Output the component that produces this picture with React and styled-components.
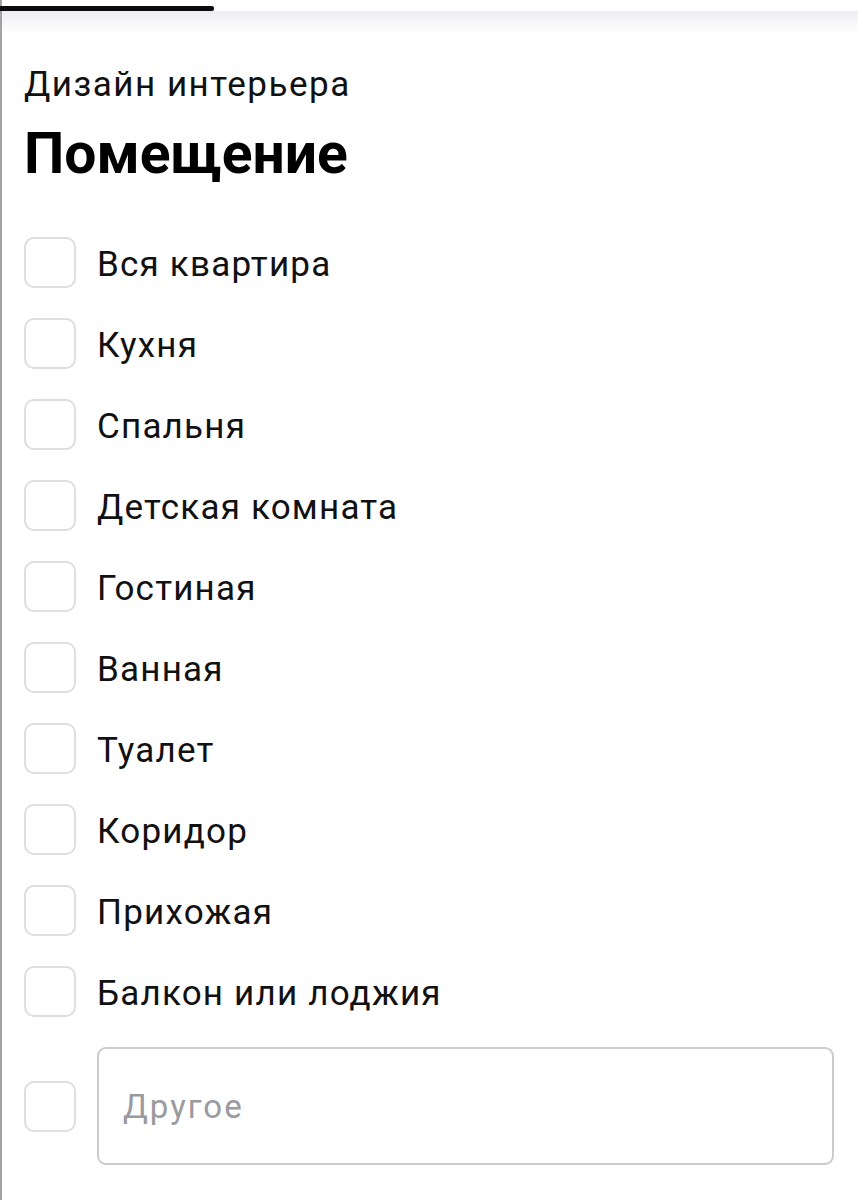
import React from 'react';
import styled, { createGlobalStyle } from 'styled-components';

const GlobalStyle = createGlobalStyle`
  html, body {
    margin: 0;
    padding: 0;
    background: #fff;
  }
  body {
    font-family: Roboto, "Liberation Sans", sans-serif;
    color: #111;
  }
`;

const Page = styled.div`
  min-height: 1200px;
  border-left: 2px solid #a3a3a3;
  box-sizing: border-box;
`;

const Header = styled.div`
  padding-top: 6px;
`;

const Progress = styled.div`
  width: 214px;
  height: 5px;
  margin-left: -2px;
  background: #0c0c0c;
  border-radius: 0 2px 2px 0;
`;

const Shade = styled.div`
  height: 24px;
  background: linear-gradient(180deg, #ededf2 0%, #f6f6f9 40%, #ffffff 100%);
`;

const Content = styled.div`
  padding: 30px 24px 0 22px;
`;

const Subtitle = styled.div`
  font-size: 35px;
  line-height: 40px;
  letter-spacing: 1.5px;
  font-weight: 400;
  color: #111;
`;

const Title = styled.h1`
  margin: 16px 0 0;
  font-size: 57px;
  line-height: 66px;
  font-weight: 700;
  color: #000;
`;

const List = styled.div`
  display: flex;
  flex-direction: column;
  gap: 30px;
  margin-top: 50px;
`;

const Row = styled.label`
  display: flex;
  align-items: center;
  gap: 21px;
`;

const Box = styled.span`
  flex: none;
  width: 52px;
  height: 51px;
  box-sizing: border-box;
  border: 2px solid #dedede;
  border-radius: 10px;
  background: #fff;
`;

const Label = styled.span`
  font-size: 35px;
  line-height: 40px;
  letter-spacing: 1.2px;
  color: #111;
  margin-top: 5px;
`;

const OtherInput = styled.input`
  flex: 1;
  height: 118px;
  box-sizing: border-box;
  border: 2px solid #cbcbce;
  border-radius: 9px;
  padding: 0 24px 0;
  font-family: Roboto, "Liberation Sans", sans-serif;
  font-size: 33px;
  letter-spacing: 2px;
  color: #111;
  background: #fff;
  outline: none;

  &::placeholder {
    color: #9a9a9f;
  }
`;

const rooms = [
  'Вся квартира',
  'Кухня',
  'Спальня',
  'Детская комната',
  'Гостиная',
  'Ванная',
  'Туалет',
  'Коридор',
  'Прихожая',
  'Балкон или лоджия',
];

function App() {
  return (
    <Page>
      <GlobalStyle />
      <Header>
        <Progress />
        <Shade />
      </Header>
      <Content>
        <Subtitle>Дизайн интерьера</Subtitle>
        <Title>Помещение</Title>
        <List>
          {rooms.map((room) => (
            <Row key={room}>
              <Box />
              <Label>{room}</Label>
            </Row>
          ))}
          <Row>
            <Box />
            <OtherInput placeholder="Другое" />
          </Row>
        </List>
      </Content>
    </Page>
  );
}

export default App;
